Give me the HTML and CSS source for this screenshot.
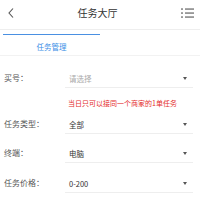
FILE: index.html
```html
<!DOCTYPE html>
<html>
<head>
<meta charset="utf-8">
<link rel="stylesheet" href="styles.css">
</head>
<body>
<div class="header">
  <svg class="back" width="6" height="10" viewBox="0 0 6 10"><path d="M5 0.5 L1 5 L5 9.5" fill="none" stroke="#555" stroke-width="1.1"/></svg>
  <div class="title">任务大厅</div>
  <svg class="menu" width="13" height="10" viewBox="0 0 13 10"><g fill="#555"><rect x="0" y="0.5" width="2" height="1.1"/><rect x="4" y="0.5" width="9" height="1.1"/><rect x="0" y="4.5" width="2" height="1.1"/><rect x="4" y="4.5" width="9" height="1.1"/><rect x="0" y="8.5" width="2" height="1.1"/><rect x="4" y="8.5" width="9" height="1.1"/></g></svg>
</div>
<div class="tabs">
  <div class="tab">任务管理</div>
</div>
<div class="form">
  <div class="row">
    <div class="label">买号：</div>
    <div class="select placeholder"><span>请选择</span><span class="caret"></span></div>
  </div>
  <div class="note">当日只可以接同一个商家的1单任务</div>
  <div class="row r2">
    <div class="label">任务类型：</div>
    <div class="select"><span>全部</span><span class="caret"></span></div>
  </div>
  <div class="row r3">
    <div class="label">终端：</div>
    <div class="select"><span>电脑</span><span class="caret"></span></div>
  </div>
  <div class="row r4">
    <div class="label">任务价格：</div>
    <div class="select"><span>0-200</span><span class="caret"></span></div>
  </div>
</div>
</body>
</html>
```
FILE: styles.css
```css
* { box-sizing: border-box; }
body {
  margin: 0;
  width: 200px;
  background: #fff;
  font-family: "Noto Sans CJK SC", "Noto Sans", sans-serif;
  color: #333;
  overflow: hidden;
}
.header {
  height: 30px;
  display: flex;
  align-items: center;
  justify-content: space-between;
  padding: 0 6px 3px 8px;
  border-bottom: 1px solid #eee;
}
.title {
  font-size: 10px;
  line-height: 12px;
  color: #333;
}
.tabs {
  padding: 4px 0 3px 3px;
  border-bottom: 1px solid #f2f2f2;
  height: 26px;
}
.tab {
  width: 97px;
  border-top: 1px solid #4a90e2;
  text-align: center;
  font-size: 7.5px;
  color: #3a8ee6;
  padding-top: 7px;
  line-height: 10px;
}
.form {
  padding: 14px 7px 0 4px;
}
.row {
  display: flex;
  align-items: center;
  height: 18px;
}
.r2 { margin-top: 8px; }
.r3 { margin-top: 11px; }
.r4 { margin-top: 12px; }
.label {
  width: 61px;
  font-size: 8px;
  color: #555;
  line-height: 10px;
  margin-bottom: 3px;
}
.select {
  flex: 1;
  align-self: stretch;
  display: flex;
  justify-content: space-between;
  align-items: center;
  border-bottom: 1px solid #eee;
  font-size: 7.5px;
  line-height: 10px;
  color: #333;
  padding: 0 6px 0 4px;
}
.placeholder { color: #aaa; }
.caret {
  width: 0; height: 0;
  border-left: 2.5px solid transparent;
  border-right: 2.5px solid transparent;
  border-top: 3px solid #555;
  margin-top: -1px;
}
.note {
  font-size: 7px;
  color: #e42b2b;
  padding: 10px 0 0 64px;
  line-height: 10px;
}
```
